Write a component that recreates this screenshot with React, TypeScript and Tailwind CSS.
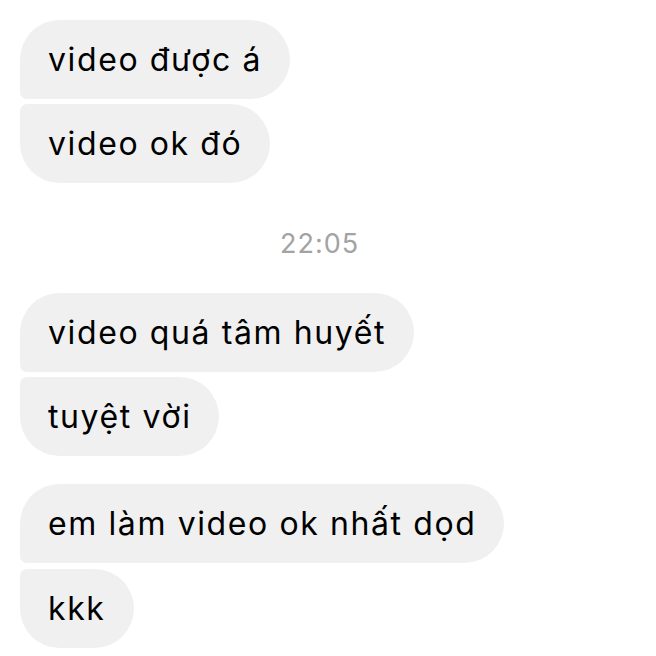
import React from "react";

type Pos = "first" | "middle" | "last";

function Bubble({ text, pos }: { text: string; pos: Pos }) {
  const corner =
    pos === "first"
      ? "rounded-tl-[40px] rounded-bl-[7px]"
      : pos === "last"
      ? "rounded-tl-[7px] rounded-bl-[40px]"
      : "rounded-tl-[7px] rounded-bl-[7px]";
  return (
    <div
      className={`h-[79px] flex items-center pl-[28px] pr-[28px] bg-[#f0f0f0] text-black rounded-r-[40px] ${corner}`}
    >
      <span className="text-[32px] leading-none tracking-[1.6px]">{text}</span>
    </div>
  );
}

export default function App() {
  return (
    <div
      className="w-[656px] h-[656px] bg-white overflow-hidden"
      style={{ fontFamily: "Inter, 'Noto Sans', sans-serif" }}
    >
      <div className="flex flex-col items-start pl-[20px] pt-[20px]">
        <div className="flex flex-col items-start gap-[5px]">
          <Bubble text="video được á" pos="first" />
          <Bubble text="video ok đó" pos="last" />
        </div>
        <div className="w-full pl-[260px] pt-[44px] pb-[32px] text-[27px] leading-[34px] tracking-[1px] text-[#a3a3a3]">
          22:05
        </div>
        <div className="flex flex-col items-start gap-[5px]">
          <Bubble text="video quá tâm huyết" pos="first" />
          <Bubble text="tuyệt vời" pos="last" />
        </div>
        <div className="flex flex-col items-start gap-[6px] pt-[28px]">
          <Bubble text="em làm video ok nhất dọd" pos="first" />
          <Bubble text="kkk" pos="last" />
        </div>
      </div>
    </div>
  );
}
